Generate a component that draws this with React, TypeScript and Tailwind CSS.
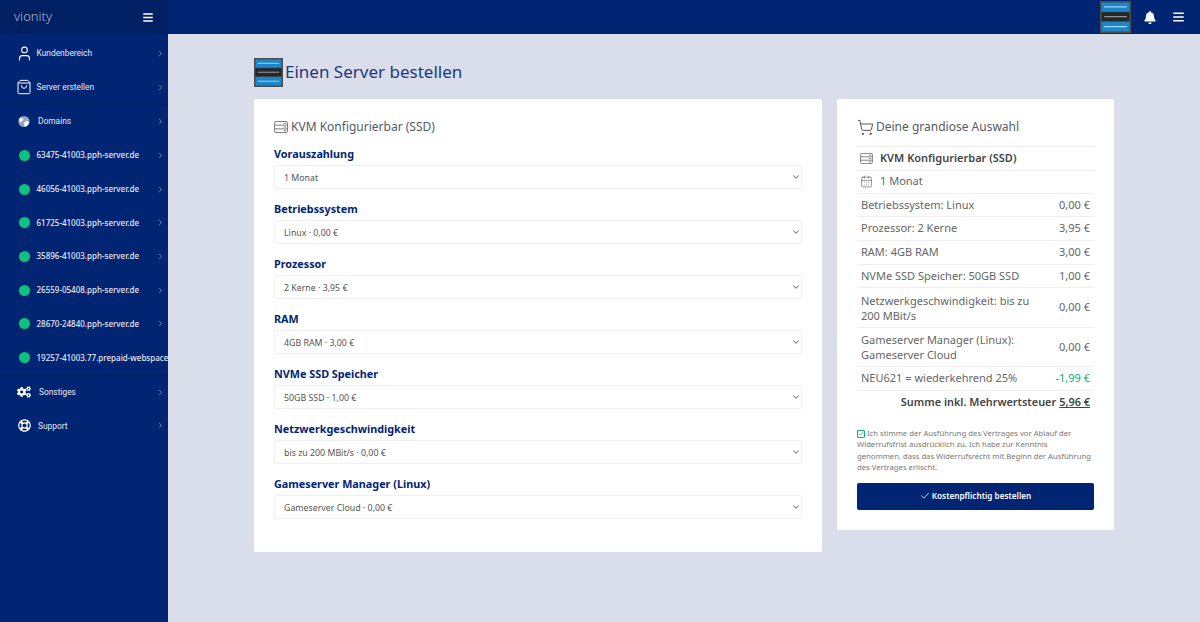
import { CalendarDays, Check, ChevronDown, ChevronRight, ShoppingBag, ShoppingCart, User } from "lucide-react";
import { FaBars, FaBell, FaCogs, FaRegLifeRing } from "react-icons/fa";
import type { ReactNode } from "react";

const servers = [
  "63475-41003.pph-server.de",
  "46056-41003.pph-server.de",
  "61725-41003.pph-server.de",
  "35896-41003.pph-server.de",
  "26559-05408.pph-server.de",
  "28670-24840.pph-server.de",
];

const fields = [
  { label: "Vorauszahlung", value: "1 Monat" },
  { label: "Betriebssystem", value: "Linux · 0,00 €" },
  { label: "Prozessor", value: "2 Kerne · 3,95 €" },
  { label: "RAM", value: "4GB RAM · 3,00 €" },
  { label: "NVMe SSD Speicher", value: "50GB SSD · 1,00 €" },
  { label: "Netzwerkgeschwindigkeit", value: "bis zu 200 MBit/s · 0,00 €" },
  { label: "Gameserver Manager (Linux)", value: "Gameserver Cloud · 0,00 €" },
];

const prices = [
  { label: "Betriebssystem: Linux", price: "0,00 €" },
  { label: "Prozessor: 2 Kerne", price: "3,95 €" },
  { label: "RAM: 4GB RAM", price: "3,00 €" },
  { label: "NVMe SSD Speicher: 50GB SSD", price: "1,00 €" },
];

function ServerStack({ size }: { size: "sm" | "lg" }) {
  return (
    <svg viewBox="0 0 30 30" preserveAspectRatio="none" className={size === "lg" ? "h-[29px] w-[29px] shrink-0" : "h-[32px] w-[31px] shrink-0"}>
      <rect width="30" height="30" fill="#4a4d52" />
      <rect x="1.5" y="1.5" width="27" height="8.5" fill="#1b87c9" />
      <rect x="1.5" y="10.5" width="27" height="8.5" fill="#25272b" />
      <rect x="1.5" y="19.5" width="27" height="9" fill="#1b87c9" />
      <path d="M4 5.5h22M4 24h22" stroke="#9fd6f5" strokeWidth="1" />
      <path d="M4 14.7h22" stroke="#a5a5a5" strokeWidth="1" />
    </svg>
  );
}

function ServerIcon({ className }: { className: string }) {
  return (
    <svg viewBox="0 0 16 14" fill="none" stroke="currentColor" strokeWidth="1" className={className}>
      <rect x="0.5" y="0.5" width="15" height="13" rx="1.5" />
      <path d="M0.5 4.8h15M0.5 9.2h15M11 2.6h3M11 7h3M11 11.4h3" />
    </svg>
  );
}

function GlobeIcon() {
  return (
    <svg viewBox="0 0 14 14" className="h-[13px] w-[13px]">
      <circle cx="7" cy="7" r="6.5" fill="#9aa5c4" />
      <path d="M2 3c2-1 3 0 4 1s-1 2-2 3-2 0-3-1zM8 7c2-1 4 0 5 1-1 3-3 5-5 5-1-2-1-4 0-6z" fill="#ffffff" />
    </svg>
  );
}

function Dot() {
  return <span className="h-[11px] w-[11px] shrink-0 rounded-full bg-[#0cc27e]" />;
}

function NavItem({ icon, label, gap, size = "text-[8.4px] font-['Roboto',sans-serif]", chevron = true }: { icon: ReactNode; label: string; gap: string; size?: string; chevron?: boolean }) {
  return (
    <div className={`flex h-[33.7px] items-center pl-[18px] pr-[3px] text-[#e4e9f5] ${size}`}>
      <span className={`flex w-[12px] shrink-0 items-center justify-center ${gap}`}>{icon}</span>
      <span className="flex-1 whitespace-nowrap">{label}</span>
      {chevron && <ChevronRight className="h-[9px] w-[9px] text-[#8ea3d6]" strokeWidth={2} />}
    </div>
  );
}

function Row({ children, className = "" }: { children: ReactNode; className?: string }) {
  return <div className={`flex items-center justify-between border-t border-[#eeeeee] px-1 ${className}`}>{children}</div>;
}

export default function App() {
  return (
    <div className="flex h-[622px] w-[1200px] overflow-hidden bg-[#dadeeb] font-['Noto_Sans',sans-serif]">
      <aside className="flex w-[168px] shrink-0 flex-col overflow-hidden bg-[#012473]">
        <div className="flex h-[34px] items-center justify-between bg-[#011f63] pl-[14px] pr-[15px]">
          <span className="text-[13px] font-light text-[#a9b8d8]">vionity</span>
          <FaBars className="h-[11px] w-[10px] text-white" />
        </div>
        <nav className="flex flex-col pt-[2.5px]">
          <NavItem icon={<User className="h-[17px] w-[17px] shrink-0 text-white" strokeWidth={1.5} />} label="Kundenbereich" gap="mr-[6.5px]" />
          <NavItem icon={<ShoppingBag className="h-[16px] w-[16px] shrink-0 text-white" strokeWidth={1.5} />} label="Server erstellen" gap="mr-[6.5px]" />
          <div className="border-t border-[#011f63]">
            <NavItem icon={<GlobeIcon />} label="Domains" gap="mr-[8px]" />
          </div>
          {servers.map((name) => (
            <NavItem key={name} icon={<Dot />} label={name} gap="mr-[6.5px]" size="text-[8px] font-medium" />
          ))}
          <NavItem icon={<Dot />} label="19257-41003.77.prepaid-webspace" gap="mr-[6.5px]" size="text-[8px] font-medium" chevron={false} />
          <div className="border-t border-[#011f63]">
            <NavItem icon={<FaCogs className="h-[14px] w-[14px] shrink-0 text-white" />} label="Sonstiges" gap="mr-[9px]" />
          </div>
          <NavItem icon={<FaRegLifeRing className="h-[13px] w-[13px] shrink-0 text-white" />} label="Support" gap="mr-[8px]" />
        </nav>
      </aside>

      <div className="flex min-w-0 flex-1 flex-col">
        <header className="flex h-[34px] items-center justify-end bg-[#012473] pr-[16px]">
          <ServerStack size="sm" />
          <FaBell className="ml-[13px] h-[13px] w-[12px] text-white" />
          <FaBars className="ml-[17px] h-[12px] w-[11px] text-white" />
        </header>

        <main className="pl-[86px] pr-[86px] pt-[23px]">
          <div className="flex h-[31px] items-center gap-[2px]">
            <ServerStack size="lg" />
            <h1 className="-translate-y-px text-[17px] leading-none text-[#1a3a7d]">Einen Server bestellen</h1>
          </div>

          <div className="mt-[11px] flex items-start gap-[15px]">
            <section className="h-[453px] w-[568px] rounded-[2px] bg-white px-[20px] pt-[20px]">
              <h2 className="flex h-[16px] items-center gap-[3px] text-[12px] text-[#555b66]">
                <ServerIcon className="h-[12px] w-[14px] text-[#666666]" />
                KVM Konfigurierbar (SSD)
              </h2>
              <div className="mt-[10px] flex flex-col gap-[11px]">
                {fields.map((field) => (
                  <div key={field.label}>
                    <label className="block h-[20px] text-[10.8px] font-bold leading-[18px] text-[#012473]">{field.label}</label>
                    <div className="relative">
                      <select
                        defaultValue={field.value}
                        className="block h-[24px] w-full appearance-none rounded-[2px] border border-[#f0f0f0] bg-white px-[9px] pt-[3px] text-[8.8px] text-[#555555] outline-none"
                      >
                        <option>{field.value}</option>
                      </select>
                      <ChevronDown className="pointer-events-none absolute right-[1px] top-[7px] h-[10px] w-[10px] text-[#777777]" strokeWidth={2.5} />
                    </div>
                  </div>
                ))}
              </div>
            </section>

            <section className="w-[277px] rounded-[2px] bg-white px-[20px] pt-[20px] pb-[20px] text-[11px] text-[#666666]">
              <h2 className="flex h-[16px] items-center gap-[3px] text-[12px] text-[#555b66]">
                <ShoppingCart className="h-[17px] w-[17px] shrink-0 text-[#444444]" strokeWidth={1.25} />
                <span className="-ml-[1px]">Deine grandiose Auswahl</span>
              </h2>
              <div className="mt-[11px] border-b border-[#eeeeee]">
                <Row className="h-[23.5px] justify-start gap-[7px] pl-[3px]">
                  <ServerIcon className="h-[11px] w-[13px] text-[#666666]" />
                  <span className="font-semibold text-[#444444]">KVM Konfigurierbar (SSD)</span>
                </Row>
                <Row className="h-[23px] justify-start gap-[7px] pl-[3px]">
                  <CalendarDays className="h-[13px] w-[13px] text-[#666666]" strokeWidth={1.25} />
                  <span>1 Monat</span>
                </Row>
                {prices.map((item) => (
                  <Row key={item.label} className="h-[23.7px]">
                    <span>{item.label}</span>
                    <span>{item.price}</span>
                  </Row>
                ))}
                <Row className="h-[39.5px]">
                  <span className="w-[170px] leading-[15px]">Netzwerkgeschwindigkeit: bis zu 200 MBit/s</span>
                  <span>0,00 €</span>
                </Row>
                <Row className="h-[39.5px]">
                  <span className="w-[170px] leading-[15.5px]">Gameserver Manager (Linux): Gameserver Cloud</span>
                  <span>0,00 €</span>
                </Row>
                <Row className="h-[23.5px]">
                  <span>NEU621 = wiederkehrend 25%</span>
                  <span className="text-[#0cae72]">-1,99 €</span>
                </Row>
              </div>
              <div className="flex h-[23px] items-center justify-end gap-[3px] pr-[4px] text-[10.9px] font-semibold text-[#444444]">
                <span>Summe inkl. Mehrwertsteuer</span>
                <span className="underline">5,96 €</span>
              </div>
              <p className="mt-[14px] whitespace-nowrap text-[7.7px] leading-[11.5px] text-[#777777]">
                <span className="mr-[2px] inline-flex h-[8px] w-[8px] items-center justify-center rounded-[1px] border border-[#0cae72] align-[-1px]">
                  <Check className="h-[6px] w-[6px] text-[#0cae72]" strokeWidth={3} />
                </span>
                Ich stimme der Ausführung des Vertrages vor Ablauf der
                <br />
                Widerrufsfrist ausdrücklich zu. Ich habe zur Kenntnis
                <br />
                genommen, dass das Widerrufsrecht mit Beginn der Ausführung
                <br />
                des Vertrages erlischt.
              </p>
              <button className="mt-[9px] flex h-[27px] w-full items-center justify-center gap-[2px] rounded-[2px] bg-[#012473] text-[8.2px] font-semibold text-white">
                <Check className="h-[10px] w-[10px]" strokeWidth={2} />
                Kostenpflichtig bestellen
              </button>
            </section>
          </div>
        </main>
      </div>
    </div>
  );
}
